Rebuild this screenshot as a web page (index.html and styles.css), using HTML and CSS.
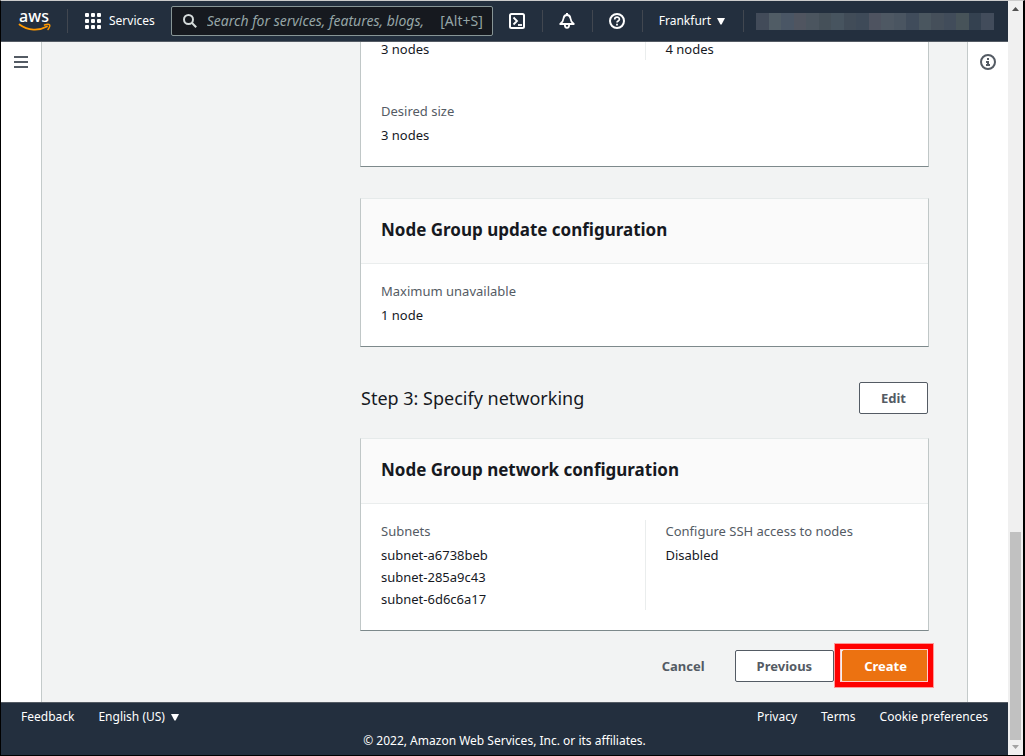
FILE: index.html
```html
<!DOCTYPE html>
<html lang="en">
<head>
<meta charset="utf-8">
<meta name="viewport" content="width=device-width, initial-scale=1">
<title>Create node group</title>
<link rel="stylesheet" href="styles.css">
</head>
<body>
<div class="window">
  <div class="app">
    <header class="topbar">
      <a class="logo" href="#" aria-label="AWS home">
        <svg width="34" height="24" viewBox="0 0 34 24">
          <text class="logo-text" x="16" y="13" text-anchor="middle">aws</text>
          <path d="M1.500 15.500C10 21.800 21 22 29 17.500" fill="none" stroke="#f90" stroke-width="1.800" stroke-linecap="round"/>
          <path d="M26.500 16c2.500-.8 4.500-.8 5-.2s0 2.700-1.500 4.700" fill="none" stroke="#f90" stroke-width="1.500" stroke-linecap="round"/>
        </svg>
      </a>
      <button class="nav-btn services" type="button">
        <svg width="16" height="16" viewBox="0 0 16 16" fill="#fff">
          <rect x="0" y="0" width="4" height="4" rx="1"/><rect x="6" y="0" width="4" height="4" rx="1"/><rect x="12" y="0" width="4" height="4" rx="1"/>
          <rect x="0" y="6" width="4" height="4" rx="1"/><rect x="6" y="6" width="4" height="4" rx="1"/><rect x="12" y="6" width="4" height="4" rx="1"/>
          <rect x="0" y="12" width="4" height="4" rx="1"/><rect x="6" y="12" width="4" height="4" rx="1"/><rect x="12" y="12" width="4" height="4" rx="1"/>
        </svg>
        <span>Services</span>
      </button>
      <label class="search">
        <svg width="14" height="14" viewBox="0 0 14 14" fill="none" stroke="#d5dbdb" stroke-width="2"><circle cx="5.500" cy="5.500" r="4.500"/><path d="M8.800 8.800L13.200 13.200"/></svg>
        <input type="text" aria-label="Search" placeholder="Search for services, features, blogs,">
        <span class="shortcut">[Alt+S]</span>
      </label>
      <button class="nav-btn icon-btn" type="button" aria-label="CloudShell">
        <svg width="16" height="16" viewBox="0 0 16 16" fill="none" stroke="#fff" stroke-width="2"><rect x="1" y="1" width="14" height="14" rx="1.500"/><path d="M4.500 4.500L8 8L4.500 11.500" stroke-width="1.800"/><path d="M9 12H13" stroke-width="1.800"/></svg>
      </button>
      <button class="nav-btn icon-btn" type="button" aria-label="Notifications">
        <svg width="16" height="16" viewBox="0 0 16 16" fill="none" stroke="#fff" stroke-width="2" stroke-linejoin="round"><path d="M8 0V2"/><path d="M1.200 11C4 9 4.300 8 4.500 5.500C4.800 3 6 2 8 2S11.200 3 11.500 5.500C11.700 8 12 9 14.800 11Z" stroke-width="1.800"/><path d="M5.800 11.500C5.800 16 10.200 16 10.200 11.500" stroke-width="1.800"/></svg>
      </button>
      <button class="nav-btn icon-btn" type="button" aria-label="Support">
        <svg width="16" height="16" viewBox="0 0 16 16" fill="none" stroke="#fff" stroke-width="2"><circle cx="8" cy="8" r="7"/><path d="M5.700 6.400C5.700 3.400 10.400 3.500 10.400 6.200C10.400 8 8 7.900 8 9.600" stroke-width="1.700"/><path d="M8 10.800V12.600" stroke-width="1.800"/></svg>
      </button>
      <button class="nav-btn region" type="button">Frankfurt
        <svg width="8" height="7" viewBox="0 0 8 7"><path d="M0 0H8L4.600 6.500H3.400Z" fill="#fff"/></svg>
      </button>
      <div class="account">
        <svg width="100%" height="17" viewBox="0 0 19 1" preserveAspectRatio="none" shape-rendering="crispEdges">
          <path fill="#424b59" d="M0 0h1v1H0z"/><path fill="#505c65" d="M1 0h1v1H1z"/><path fill="#4a5665" d="M2 0h1v1H2z"/><path fill="#505560" d="M3 0h1v1H3z"/><path fill="#4b555f" d="M4 0h1v1H4z"/><path fill="#455059" d="M5 0h1v1H5z"/><path fill="#47545f" d="M6 0h1v1H6z"/><path fill="#414c58" d="M7 0h1v1H7z"/><path fill="#3e4a58" d="M8 0h1v1H8z"/><path fill="#4e5360" d="M9 0h1v1H9z"/><path fill="#4e5863" d="M10 0h1v1H10z"/><path fill="#4a5561" d="M11 0h1v1H11z"/><path fill="#404c5b" d="M12 0h1v1H12z"/><path fill="#4a565f" d="M13 0h1v1H13z"/><path fill="#454f5a" d="M14 0h1v1H14z"/><path fill="#414c5a" d="M15 0h1v1H15z"/><path fill="#475359" d="M16 0h1v1H16z"/><path fill="#344150" d="M17 0h1v1H17z"/><path fill="#424c5b" d="M18 0h1v1H18z"/>
        </svg>
      </div>
    </header>

    <div class="shell">
      <nav class="rail">
        <button class="rail-btn" type="button" aria-label="Open navigation">
          <svg width="14" height="12" viewBox="0 0 14 12" fill="#545b64"><path d="M0 0h14v2H0zM0 5h14v2H0zM0 10h14v2H0z"/></svg>
        </button>
      </nav>

      <main class="content">
        <div class="wizard">
          <section class="card">
            <div class="card-body">
              <dl class="col"><dd>3 nodes</dd></dl>
              <dl class="col"><dd>4 nodes</dd></dl>
              <dl class="col"><dt>Desired size</dt><dd>3 nodes</dd></dl>
            </div>
          </section>

          <section class="card">
            <h3 class="card-title">Node Group update configuration</h3>
            <div class="card-body">
              <dl class="col"><dt>Maximum unavailable</dt><dd>1 node</dd></dl>
            </div>
          </section>

          <div class="step">
            <h2 class="step-title">Step 3: Specify networking</h2>
            <button class="btn" type="button">Edit</button>
          </div>

          <section class="card">
            <h3 class="card-title">Node Group network configuration</h3>
            <div class="card-body">
              <dl class="col"><dt>Subnets</dt><dd>subnet-a6738beb</dd><dd>subnet-285a9c43</dd><dd>subnet-6d6c6a17</dd></dl>
              <dl class="col"><dt>Configure SSH access to nodes</dt><dd>Disabled</dd></dl>
            </div>
          </section>

          <div class="actions">
            <button class="btn link" type="button">Cancel</button>
            <button class="btn" type="button">Previous</button>
            <button class="btn primary" type="button">Create</button>
          </div>
        </div>
      </main>

      <aside class="rail info">
        <button class="rail-btn" type="button" aria-label="Info">
          <svg width="16" height="16" viewBox="0 0 16 16"><circle cx="8" cy="8" r="7" fill="none" stroke="#545b64" stroke-width="2"/><path d="M7 4h2v2H7zM6 7h3v3h1v2H6v-2h1V9H6z" fill="#545b64"/></svg>
        </button>
      </aside>
    </div>

    <footer class="footer">
      <div class="footer-row">
        <a href="#">Feedback</a>
        <button class="language" type="button">English (US)
          <svg width="8" height="7" viewBox="0 0 8 7"><path d="M0 0H8L4.600 6.500H3.400Z" fill="#fff"/></svg>
        </button>
        <a class="push" href="#">Privacy</a>
        <a href="#">Terms</a>
        <a href="#">Cookie preferences</a>
      </div>
      <p class="copyright">© 2022, Amazon Web Services, Inc. or its affiliates.</p>
    </footer>
  </div>

  <div class="scrollbar" aria-hidden="true">
    <svg class="arrow" width="15" height="15" viewBox="0 0 15 15"><path d="M4 10H11L7.500 6Z" fill="#505050"/></svg>
    <div class="track"><div class="thumb"></div></div>
    <svg class="arrow" width="15" height="15" viewBox="0 0 15 15"><path d="M4 5H11L7.500 9Z" fill="#a3a3a3"/></svg>
  </div>
</div>
</body>
</html>
```

FILE: styles.css
```css
* { box-sizing: border-box; }

body {
  margin: 0;
  background: #000;
  color: #16191f;
  font: 13px/22px "Noto Sans", "Open Sans", sans-serif;
}

button, input { font: inherit; color: inherit; }
button { cursor: pointer; }
h2, h3, p, dl, dd { margin: 0; }
svg { display: block; flex: none; }

.window {
  display: flex;
  height: 100vh;
  border: 1px solid #000;
  border-width: 1px 2px 1px 1px;
  border-top-color: #ccc;
  overflow: hidden;
}

.app {
  flex: 1;
  min-width: 0;
  display: flex;
  flex-direction: column;
}

/* Top bar */
.topbar {
  display: flex;
  align-items: center;
  flex: none;
  height: 41px;
  padding-right: 14px;
  background: #232f3e;
  border-bottom: 1px solid #545b64;
  color: #fff;
  font-size: 12px;
}

.logo {
  width: 67px;
  padding: 0 15px 0 17px;
  border-right: 1px solid #414750;
}

.logo svg { overflow: visible; }

.logo-text {
  font: 500 16px "Noto Sans", sans-serif;
  fill: #fff;
}

.nav-btn {
  display: flex;
  align-items: center;
  height: 22px;
  padding: 0;
  border: 0;
  background: none;
}

.services { gap: 8px; padding: 0 16px 0 17px; }

.search {
  display: flex;
  align-items: center;
  flex: 0 1 322px;
  min-width: 0;
  height: 30px;
  padding: 0 9px 0 11px;
  background: #16191f;
  border: 1px solid #879596;
  border-radius: 2px;
  color: #95a5a6;
  font-size: 14px;
}

.search input {
  flex: 1;
  min-width: 0;
  padding: 0 0 0 10px;
  border: 0;
  outline: 0;
  background: none;
}

.search input::placeholder { color: #95a5a6; font-style: italic; opacity: 1; }

.icon-btn {
  justify-content: center;
  width: 50px;
  border-right: 1px solid #414750;
}

.region {
  gap: 6px;
  padding: 0 18px 0 16px;
  border-right: 1px solid #414750;
}

.account { flex: 1; min-width: 0; margin-left: 12px; }

/* Main area */
.shell {
  flex: 1;
  min-height: 0;
  display: flex;
  background: #f2f3f3;
}

.rail {
  flex: none;
  width: 41px;
  background: #fff;
  border-right: 1px solid #c4caca;
}

.rail.info { border-right: 0; border-left: 1px solid #c4caca; }

.rail-btn {
  display: flex;
  align-items: center;
  justify-content: center;
  width: 40px;
  height: 40px;
  padding: 0;
  border: 0;
  background: none;
}

.content {
  flex: 1;
  min-width: 0;
  display: flex;
  flex-direction: column;
  justify-content: flex-end;
  padding: 0 38px 20px 318px;
  overflow: hidden;
}

.card {
  margin-bottom: 31px;
  background: #fff;
  border: 1px solid #c0c7c7;
  border-top-color: #e6eaea;
  border-bottom-color: #7d898b;
}

.card-title {
  padding: 19px 20px 21px;
  background: #fafafa;
  border-bottom: 1px solid #eaeded;
  font-size: 17px;
  line-height: 24px;
}

.card-body {
  display: grid;
  grid-template-columns: 1fr 1fr;
  row-gap: 40px;
  padding: 16px 20px 20px;
}

.col:nth-child(even) { padding-left: 20px; border-left: 1px solid #eaeded; }
.col dt { margin-bottom: 2px; color: #545b64; }

.step {
  display: flex;
  align-items: center;
  justify-content: space-between;
  margin: 35px 1px 24px;
}

.step-title { font-size: 18px; font-weight: 400; }

.btn {
  height: 32px;
  padding: 0 21px;
  background: #fff;
  border: 1px solid #545b64;
  border-radius: 2px;
  color: #545b64;
  font-weight: 700;
}

.btn.link { background: none; border-color: transparent; }

.btn.primary {
  position: relative;
  background: #ec7211;
  border-color: #ec7211;
  color: #fff;
}

/* Frame that calls out the final step */
.btn.primary::after {
  content: "";
  position: absolute;
  inset: -7px -5px -6px -8px;
  border: 5px solid #f00;
  box-shadow: 0 0 0 1px #f99, inset 0 0 0 1px #fcc;
}

.actions {
  display: flex;
  justify-content: flex-end;
  gap: 8px;
  margin-top: -12px;
}

/* Footer */
.footer {
  flex: none;
  padding: 2px 20px;
  background: #232f3e;
  border-top: 1px solid #545b64;
  color: #fff;
  font-size: 12px;
  line-height: 24px;
}

.footer a { color: inherit; text-decoration: none; }
.footer-row { display: flex; gap: 24px; }
.push { margin-left: auto; }

.language {
  display: flex;
  align-items: center;
  gap: 6px;
  padding: 0;
  border: 0;
  background: none;
}

.copyright { text-align: center; }

/* Scrollbar */
.scrollbar {
  flex: none;
  display: flex;
  flex-direction: column;
  width: 15px;
  background: #f0f0f0;
}

.track {
  flex: 1;
  display: flex;
  flex-direction: column;
  justify-content: flex-end;
  padding: 0 2px;
}

.thumb { height: 28.8%; background: #c1c1c1; }
```
